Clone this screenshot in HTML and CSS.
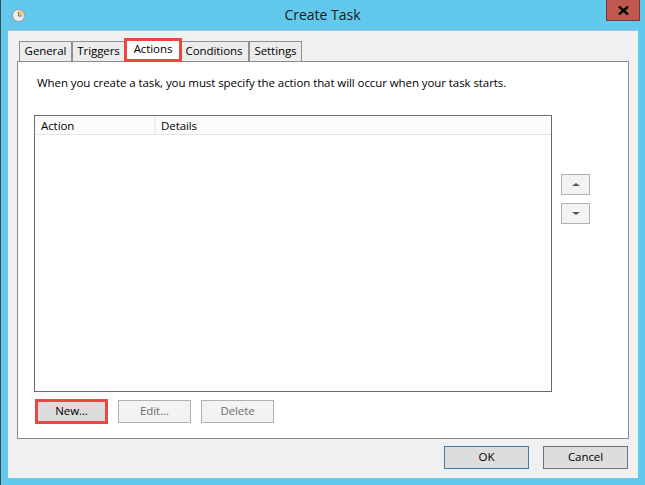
FILE: index.html
```html
<!DOCTYPE html>
<html>
<head>
    <link rel="stylesheet" href="styles.css">
</head>
<body>
    <div class="window">
        <div class="titlebar">
            <svg class="app-icon" width="13" height="13" viewBox="0 0 13 13">
                <circle cx="6.5" cy="6.5" r="6" fill="#ececec" stroke="#8f989c"/>
                <path d="M6.5 1.6A4.9 4.9 0 0 1 11.4 6.5H6.5Z" fill="#edc873"/>
                <path d="M6.5 3V7H10" fill="none" stroke="#707070"/>
            </svg>
            <div class="title">Create Task</div>
            <button class="close">
                <svg width="11" height="9" viewBox="0 0 11 9">
                    <path d="M1 0.5L10 8.5M10 0.5L1 8.5" stroke="#000" stroke-width="2.4"/>
                </svg>
            </button>
        </div>
        <div class="client">
            <div class="tabs">
                <div class="tab tab-general">General</div>
                <div class="tab tab-triggers">Triggers</div>
                <div class="tab tab-actions">Actions</div>
                <div class="tab tab-conditions">Conditions</div>
                <div class="tab tab-settings">Settings</div>
            </div>
            <div class="panel">
                <p class="intro">When you create a task, you must specify the action that will occur when your task starts.</p>
                <div class="list-row">
                    <div class="list">
                        <div class="list-head">
                            <div class="col col-action">Action</div>
                            <div class="col">Details</div>
                        </div>
                    </div>
                    <div class="arrows">
                        <button class="arrow"><span class="tri-up"></span></button>
                        <button class="arrow"><span class="tri-down"></span></button>
                    </div>
                </div>
                <div class="list-buttons">
                    <button class="btn btn-new">New...</button>
                    <button class="btn btn-off">Edit...</button>
                    <button class="btn btn-off">Delete</button>
                </div>
            </div>
            <div class="footer">
                <button class="btn btn-main btn-ok">OK</button>
                <button class="btn btn-main">Cancel</button>
            </div>
        </div>
    </div>
</body>
</html>
```

FILE: styles.css
```css
* {
    box-sizing: border-box;
}

body {
    margin: 0;
    font-family: "Open Sans", "Noto Sans", sans-serif;
    font-size: 11.5px;
    letter-spacing: -0.08px;
    color: #000;
}

button {
    font: inherit;
    letter-spacing: inherit;
    padding: 0 0 2px;
}

.window {
    width: 645px;
    height: 485px;
    background: #63c9ec;
    border-left: 1px solid #3a4a52;
    padding: 0 7px 7px 7px;
    display: flex;
    flex-direction: column;
    overflow: hidden;
}

.titlebar {
    height: 30px;
    flex: none;
    display: grid;
    grid-template-columns: 1fr auto 1fr;
    align-items: start;
}

.app-icon {
    margin: 9px 0 0 4px;
}

.title {
    font-size: 14px;
    letter-spacing: 0;
    margin-top: 5px;
    padding-right: 1px;
    color: #1a1a1a;
}

.close {
    justify-self: end;
    width: 34px;
    height: 21px;
    margin-right: -2px;
    padding: 0;
    background: #c0584f;
    border: 1px solid #6f3b3b;
    border-top: none;
    display: flex;
    align-items: center;
    justify-content: center;
}

.client {
    flex: 1;
    background: #f0f0f0;
    border-top: 1px solid #a9c3cc;
    padding: 0 9px;
    display: flex;
    flex-direction: column;
}

.tabs {
    height: 30px;
    flex: none;
    display: flex;
    align-items: flex-end;
    padding-left: 2px;
    position: relative;
    z-index: 1;
}

.tab {
    height: 20px;
    background: #ececec;
    border: 1px solid #8e8e99;
    border-bottom: none;
    text-align: center;
    line-height: 18px;
}

.tab-general {
    width: 53px;
}

.tab-triggers {
    width: 53px;
}

.tab-actions {
    width: 58px;
    height: 24px;
    margin: 0 -1px -1px -1px;
    background: #fff;
    border: 3px solid #e8483f;
    line-height: 16px;
    position: relative;
}

.tab-conditions {
    width: 68px;
    padding-right: 2px;
}

.tab-settings {
    width: 53px;
}

.panel {
    width: 612px;
    height: 378px;
    flex: none;
    background: #fff;
    border: 1px solid #8a8a94;
    padding: 0 16px;
}

.intro {
    margin: 12px 0 0 3px;
    height: 17px;
    line-height: 17px;
    white-space: nowrap;
}

.list-row {
    display: flex;
    margin-top: 24px;
}

.list {
    width: 518px;
    height: 277px;
    border: 1px solid #6a6a6a;
}

.list-head {
    display: flex;
    height: 19px;
    background: #fcfcfc;
    border-bottom: 1px solid #e3e3e3;
    line-height: 19px;
}

.col {
    padding-left: 5px;
}

.col-action {
    width: 121px;
    padding-left: 6px;
    border-right: 2px solid #eeeeee;
}

.arrows {
    display: flex;
    flex-direction: column;
    gap: 8px;
    margin: 59px 0 0 9px;
}

.arrow {
    width: 29px;
    height: 21px;
    padding: 0;
    background: #f3f3f3;
    border: 1px solid #adb2b2;
    display: flex;
    align-items: center;
    justify-content: center;
}

.tri-up {
    border: 4px solid transparent;
    border-top: none;
    border-bottom: 3px solid #555;
}

.tri-down {
    border: 4px solid transparent;
    border-bottom: none;
    border-top: 3px solid #555;
}

.list-buttons {
    display: flex;
    align-items: center;
    gap: 10px;
    margin-top: 7px;
    padding-left: 1px;
}

.btn {
    width: 73px;
    height: 23px;
    background: #f3f3f3;
    border: 1px solid #adb2b2;
}

.btn-new {
    height: 25px;
    background: #dcdcdc;
    border: 3px solid #e8483f;
}

.btn-off {
    color: #6d6d6d;
}

.footer {
    display: flex;
    justify-content: flex-end;
    gap: 14px;
    margin-top: 7px;
    padding-right: 1px;
}

.btn-main {
    width: 85px;
    background: #dddddd;
    border-color: #707070;
}

.btn-ok {
    border-color: #3d7bad;
}
```
